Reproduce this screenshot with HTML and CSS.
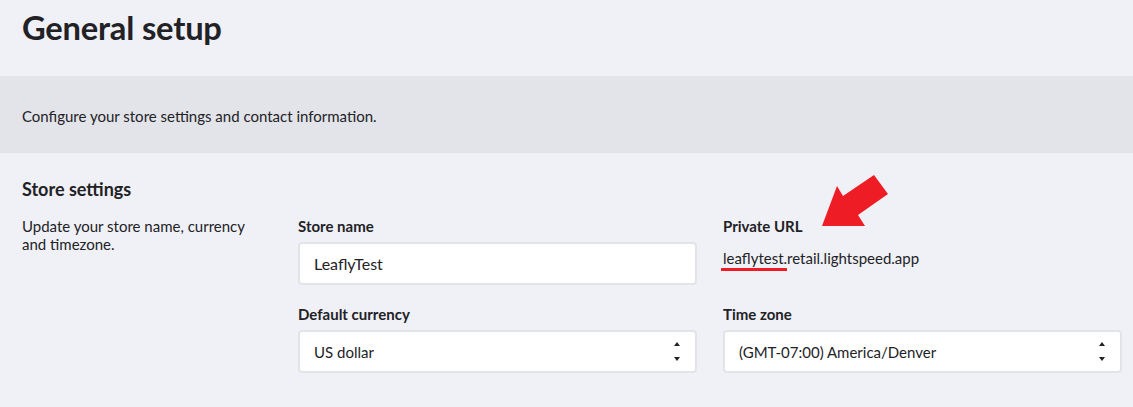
FILE: index.html
```html
<!DOCTYPE html>
<html>
<head>
<meta charset="utf-8">
<link rel="stylesheet" href="styles.css">
</head>
<body>
<header class="page-header">
  <h1 class="title">General setup</h1>
</header>
<div class="band">
  <p class="band-text">Configure your store settings and contact information.</p>
</div>
<section class="section">
  <h2 class="section-title">Store settings</h2>
  <div class="section-body">
    <p class="section-desc">Update your store name, currency and timezone.</p>
    <div class="fields">
      <div class="field">
        <div class="label">Store name</div>
        <div class="input">LeaflyTest</div>
      </div>
      <div class="field">
        <div class="label">Private URL</div>
        <div class="url"><span class="sub">leaflytest.</span>retail.lightspeed.app</div>
        <svg class="arrow" width="80" height="60" viewBox="0 0 80 60">
          <polygon points="1,51 16,11 22,21 53,0 67,19 37,40 44,51" fill="#ee1c25"/>
        </svg>
      </div>
      <div class="field">
        <div class="label">Default currency</div>
        <div class="input select">US dollar<span class="carets"><span class="up"></span><span class="down"></span></span></div>
      </div>
      <div class="field">
        <div class="label">Time zone</div>
        <div class="input select">(GMT-07:00) America/Denver<span class="carets"><span class="up"></span><span class="down"></span></span></div>
      </div>
    </div>
  </div>
</section>
</body>
</html>
```
FILE: styles.css
```css
* { box-sizing: border-box; }
html, body { margin: 0; padding: 0; }
body {
  background: #f0f1f6;
  font-family: Lato, "Open Sans", sans-serif;
  color: #222226;
  width: 1133px;
  height: 407px;
  overflow: hidden;
}
.page-header {
  height: 76px;
  padding: 0 22px;
}
.title {
  margin: 0;
  padding-top: 8px;
  font-size: 32.7px;
  line-height: 40px;
  font-weight: 700;
  letter-spacing: -0.2px;
}
.band {
  height: 77px;
  background: #e3e4e9;
  padding: 0 22px;
  display: flex;
  align-items: center;
}
.band-text {
  margin: 0;
  font-size: 15px;
  line-height: 20px;
  padding-top: 2px;
}
.section {
  padding: 24px 11px 0 22px;
}
.section-title {
  margin: 0;
  font-size: 18px;
  line-height: 24px;
  font-weight: 700;
}
.section-body {
  display: flex;
  margin-top: 16px;
}
.section-desc {
  margin: 0;
  width: 276px;
  padding-right: 30px;
  font-size: 15px;
  line-height: 18px;
}
.fields {
  display: grid;
  grid-template-columns: 399px 399px;
  column-gap: 26px;
  row-gap: 20px;
}
.field {
  position: relative;
}
.label {
  font-size: 15px;
  font-weight: 700;
  line-height: 18px;
  margin-bottom: 7px;
}
.input {
  height: 43px;
  background: #fff;
  border: 2px solid #e3e4e9;
  border-radius: 4px;
  padding: 0 14px;
  font-size: 16px;
  display: flex;
  align-items: center;
}
.select {
  font-size: 15px;
  justify-content: space-between;
}
.carets {
  display: flex;
  flex-direction: column;
  gap: 11px;
  margin-right: 1px;
}
.up, .down {
  width: 0;
  height: 0;
  border-left: 3.5px solid transparent;
  border-right: 3.5px solid transparent;
}
.up { border-bottom: 4px solid #222; }
.down { border-top: 4px solid #222; }
.url {
  font-size: 15px;
  line-height: 20px;
  padding-top: 6px;
}
.sub {
  position: relative;
}
.sub::after {
  content: "";
  position: absolute;
  left: -2px;
  right: 0;
  bottom: -4px;
  height: 3px;
  background: #ee1c25;
}
.arrow {
  position: absolute;
  left: 98px;
  top: -42px;
}
```
